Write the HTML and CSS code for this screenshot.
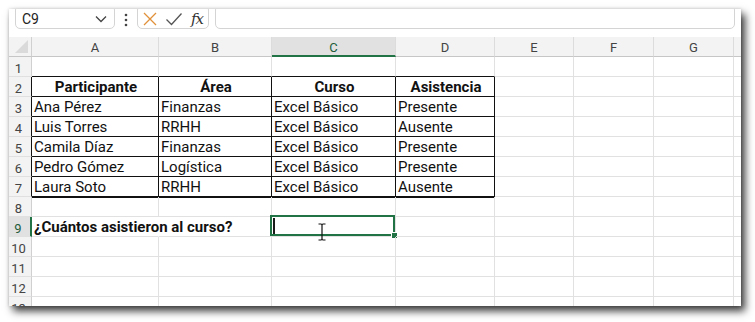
FILE: index.html
```html
<!DOCTYPE html>
<html lang="es">
<head>
<meta charset="utf-8">
<title>Excel</title>
<link rel="stylesheet" href="styles.css">
</head>
<body>
<div class="stage">
  <div class="window">
    <div class="toolbar">
      <div class="namebox">
        <span class="ref">C9</span>
        <svg class="chev" width="12" height="8" viewBox="0 0 12 8"><path d="M1 1.5 L6 6.5 L11 1.5" fill="none" stroke="#444" stroke-width="1.3"/></svg>
      </div>
      <svg class="dots" width="4" height="14" viewBox="0 0 4 14"><circle cx="2" cy="2" r="1.3" fill="#444"/><circle cx="2" cy="7" r="1.3" fill="#444"/><circle cx="2" cy="12" r="1.3" fill="#444"/></svg>
      <div class="fxgroup">
        <svg class="btn" width="16" height="16" viewBox="0 0 16 16"><path d="M2 2 L14 14 M14 2 L2 14" stroke="#e0913a" stroke-width="1.3" fill="none"/></svg>
        <svg class="btn" width="18" height="16" viewBox="0 0 18 16"><path d="M1.5 8.5 L6.5 13.5 L16.5 2.5" stroke="#555" stroke-width="1.3" fill="none"/></svg>
        <span class="fx">fx</span>
      </div>
      <div class="formula"></div>
    </div>
    <div class="grid">
      <div class="corner"><span class="tri"></span></div>
      <div class="ch">A</div><div class="ch">B</div><div class="ch sel">C</div><div class="ch">D</div><div class="ch">E</div><div class="ch">F</div><div class="ch">G</div><div class="ch"></div>

      <div class="rh">1</div>
      <div class="c top"></div><div class="c top"></div><div class="c top"></div><div class="c top"></div><div class="c"></div><div class="c"></div><div class="c"></div><div class="c"></div>

      <div class="rh tb">2</div>
      <div class="c t b ctr">Participante</div><div class="c t b ctr">Área</div><div class="c t b ctr">Curso</div><div class="c t b ctr">Asistencia</div><div class="c"></div><div class="c"></div><div class="c"></div><div class="c"></div>

      <div class="rh tb">3</div>
      <div class="c t">Ana Pérez</div><div class="c t">Finanzas</div><div class="c t">Excel Básico</div><div class="c t">Presente</div><div class="c"></div><div class="c"></div><div class="c"></div><div class="c"></div>

      <div class="rh tb">4</div>
      <div class="c t">Luis Torres</div><div class="c t">RRHH</div><div class="c t">Excel Básico</div><div class="c t">Ausente</div><div class="c"></div><div class="c"></div><div class="c"></div><div class="c"></div>

      <div class="rh tb">5</div>
      <div class="c t">Camila Díaz</div><div class="c t">Finanzas</div><div class="c t">Excel Básico</div><div class="c t">Presente</div><div class="c"></div><div class="c"></div><div class="c"></div><div class="c"></div>

      <div class="rh tb">6</div>
      <div class="c t">Pedro Gómez</div><div class="c t">Logística</div><div class="c t">Excel Básico</div><div class="c t">Presente</div><div class="c"></div><div class="c"></div><div class="c"></div><div class="c"></div>

      <div class="rh tb">7</div>
      <div class="c t last">Laura Soto</div><div class="c t last">RRHH</div><div class="c t last">Excel Básico</div><div class="c t last">Ausente</div><div class="c"></div><div class="c"></div><div class="c"></div><div class="c"></div>

      <div class="rh">8</div>
      <div class="c"></div><div class="c"></div><div class="c"></div><div class="c"></div><div class="c"></div><div class="c"></div><div class="c"></div><div class="c"></div>

      <div class="rh rsel">9</div>
      <div class="c b over">¿Cuántos asistieron al curso?</div><div class="c"></div>
      <div class="c active">
        <div class="selbox"><span class="caret"></span><span class="handle"></span></div>
        <svg class="ibeam" width="8" height="18" viewBox="0 0 8 18"><path d="M0.5 1 H3 Q4 1 4 2.5 V15.5 Q4 17 3 17 H0.5 M7.5 1 H5 Q4 1 4 2.5 M4 15.5 Q4 17 5 17 H7.5" fill="none" stroke="#111" stroke-width="1.2"/></svg>
      </div>
      <div class="c"></div><div class="c"></div><div class="c"></div><div class="c"></div><div class="c"></div>

      <div class="rh">10</div>
      <div class="c"></div><div class="c"></div><div class="c"></div><div class="c"></div><div class="c"></div><div class="c"></div><div class="c"></div><div class="c"></div>

      <div class="rh">11</div>
      <div class="c"></div><div class="c"></div><div class="c"></div><div class="c"></div><div class="c"></div><div class="c"></div><div class="c"></div><div class="c"></div>

      <div class="rh">12</div>
      <div class="c"></div><div class="c"></div><div class="c"></div><div class="c"></div><div class="c"></div><div class="c"></div><div class="c"></div><div class="c"></div>

      <div class="rh">13</div>
      <div class="c"></div><div class="c"></div><div class="c"></div><div class="c"></div><div class="c"></div><div class="c"></div><div class="c"></div><div class="c"></div>
    </div>
  </div>
</div>
</body>
</html>
```

FILE: styles.css
```css
* { box-sizing: border-box; }
html, body { margin: 0; padding: 0; background: #fff; }
body { width: 755px; height: 322px; overflow: hidden; font-family: Roboto, "Liberation Sans", sans-serif; }

.stage { padding: 9px 0 0 9px; }

.window {
  width: 732px;
  height: 297px;
  background: #fff;
  overflow: hidden;
  box-shadow: 4px 5px 8px rgba(0,0,0,0.78), 0 0 3px rgba(0,0,0,0.18);
}

.toolbar {
  height: 28px;
  display: flex;
  align-items: flex-start;
  padding-left: 6px;
}

.namebox {
  margin-top: -4px;
  width: 100px;
  height: 24px;
  border: 1px solid #d4d4d4;
  border-radius: 5px;
  display: flex;
  align-items: center;
  justify-content: space-between;
  padding: 3px 7px 0 6px;
  font-size: 14px;
  color: #222;
}
.chev { margin-top: 1px; }

.dots { margin: 4px 9px 0 9px; }

.fxgroup {
  margin-top: -4px;
  width: 72px;
  height: 24px;
  border: 1px solid #d4d4d4;
  border-radius: 5px;
  display: flex;
  align-items: center;
  padding: 3px 0 0 4px;
  gap: 7px;
}
.fx {
  font-family: "DejaVu Serif", "Liberation Serif", serif;
  font-style: italic;
  font-size: 15px;
  color: #333;
  margin-left: 1px;
  letter-spacing: -1px;
}

.formula {
  margin-top: -4px;
  margin-left: 6px;
  width: 520px;
  height: 24px;
  border: 1px solid #d4d4d4;
  border-radius: 5px;
}

.grid {
  display: grid;
  grid-template-columns: 23px 127px 113px 124px 99px 79px 80px 80px 80px;
  grid-template-rows: 20px repeat(13, 20px);
}

.corner {
  background: #f3f3f3;
  border-right: 1px solid #d0d0d0;
  border-bottom: 1px solid #c6c6c6;
  position: relative;
}
.tri {
  position: absolute;
  left: 6px;
  top: 3px;
  width: 0; height: 0;
  border-left: 13px solid transparent;
  border-bottom: 13px solid #dadada;
}

.ch {
  background: #f3f3f3;
  border-right: 1px solid #dcdcdc;
  border-bottom: 1px solid #c6c6c6;
  color: #444;
  font-size: 13px;
  display: flex;
  align-items: center;
  justify-content: center;
  padding-top: 2px;
}
.ch.sel {
  background: #e1e1e1;
  border-bottom: 2px solid #217346;
  color: #215c3b;
}

.rh {
  background: #f3f3f3;
  border-right: 1px solid #d0d0d0;
  border-bottom: 1px solid #e0e0e0;
  color: #444;
  font-size: 13px;
  display: flex;
  align-items: center;
  justify-content: center;
  padding: 3px 3px 0 0;
}
.rh.tb { border-right-color: #111; }
.rh.rsel {
  background: #e1e1e1;
  border-right: 2px solid #217346;
  color: #215c3b;
}

.c {
  border-right: 1px solid #e1e1e1;
  border-bottom: 1px solid #e1e1e1;
  font-size: 15px;
  color: #111;
  display: flex;
  align-items: flex-end;
  padding: 0 0 0 2px;
  line-height: 17px;
  white-space: nowrap;
  position: relative;
}
.c.top { border-bottom-color: #111; }
.c.t { border-right-color: #111; border-bottom-color: #111; }
.c.t.last { box-shadow: 0 1px 0 #111; }
.c.b { font-weight: bold; }
.c.ctr { justify-content: center; }
.c.over { overflow: visible; border-right-color: transparent; z-index: 1; }

.selbox {
  position: absolute;
  left: -2px;
  top: -2px;
  right: 0;
  bottom: 0;
  border: 2px solid #217346;
}
.caret {
  position: absolute;
  left: 1px;
  top: 1px;
  width: 2px;
  height: 16px;
  background: #1a1a1a;
}
.handle {
  position: absolute;
  right: -4px;
  bottom: -4px;
  width: 6px;
  height: 6px;
  background: #217346;
  border-left: 1px solid #fff;
  border-top: 1px solid #fff;
}
.ibeam {
  position: absolute;
  left: 46px;
  top: 6px;
}
```
